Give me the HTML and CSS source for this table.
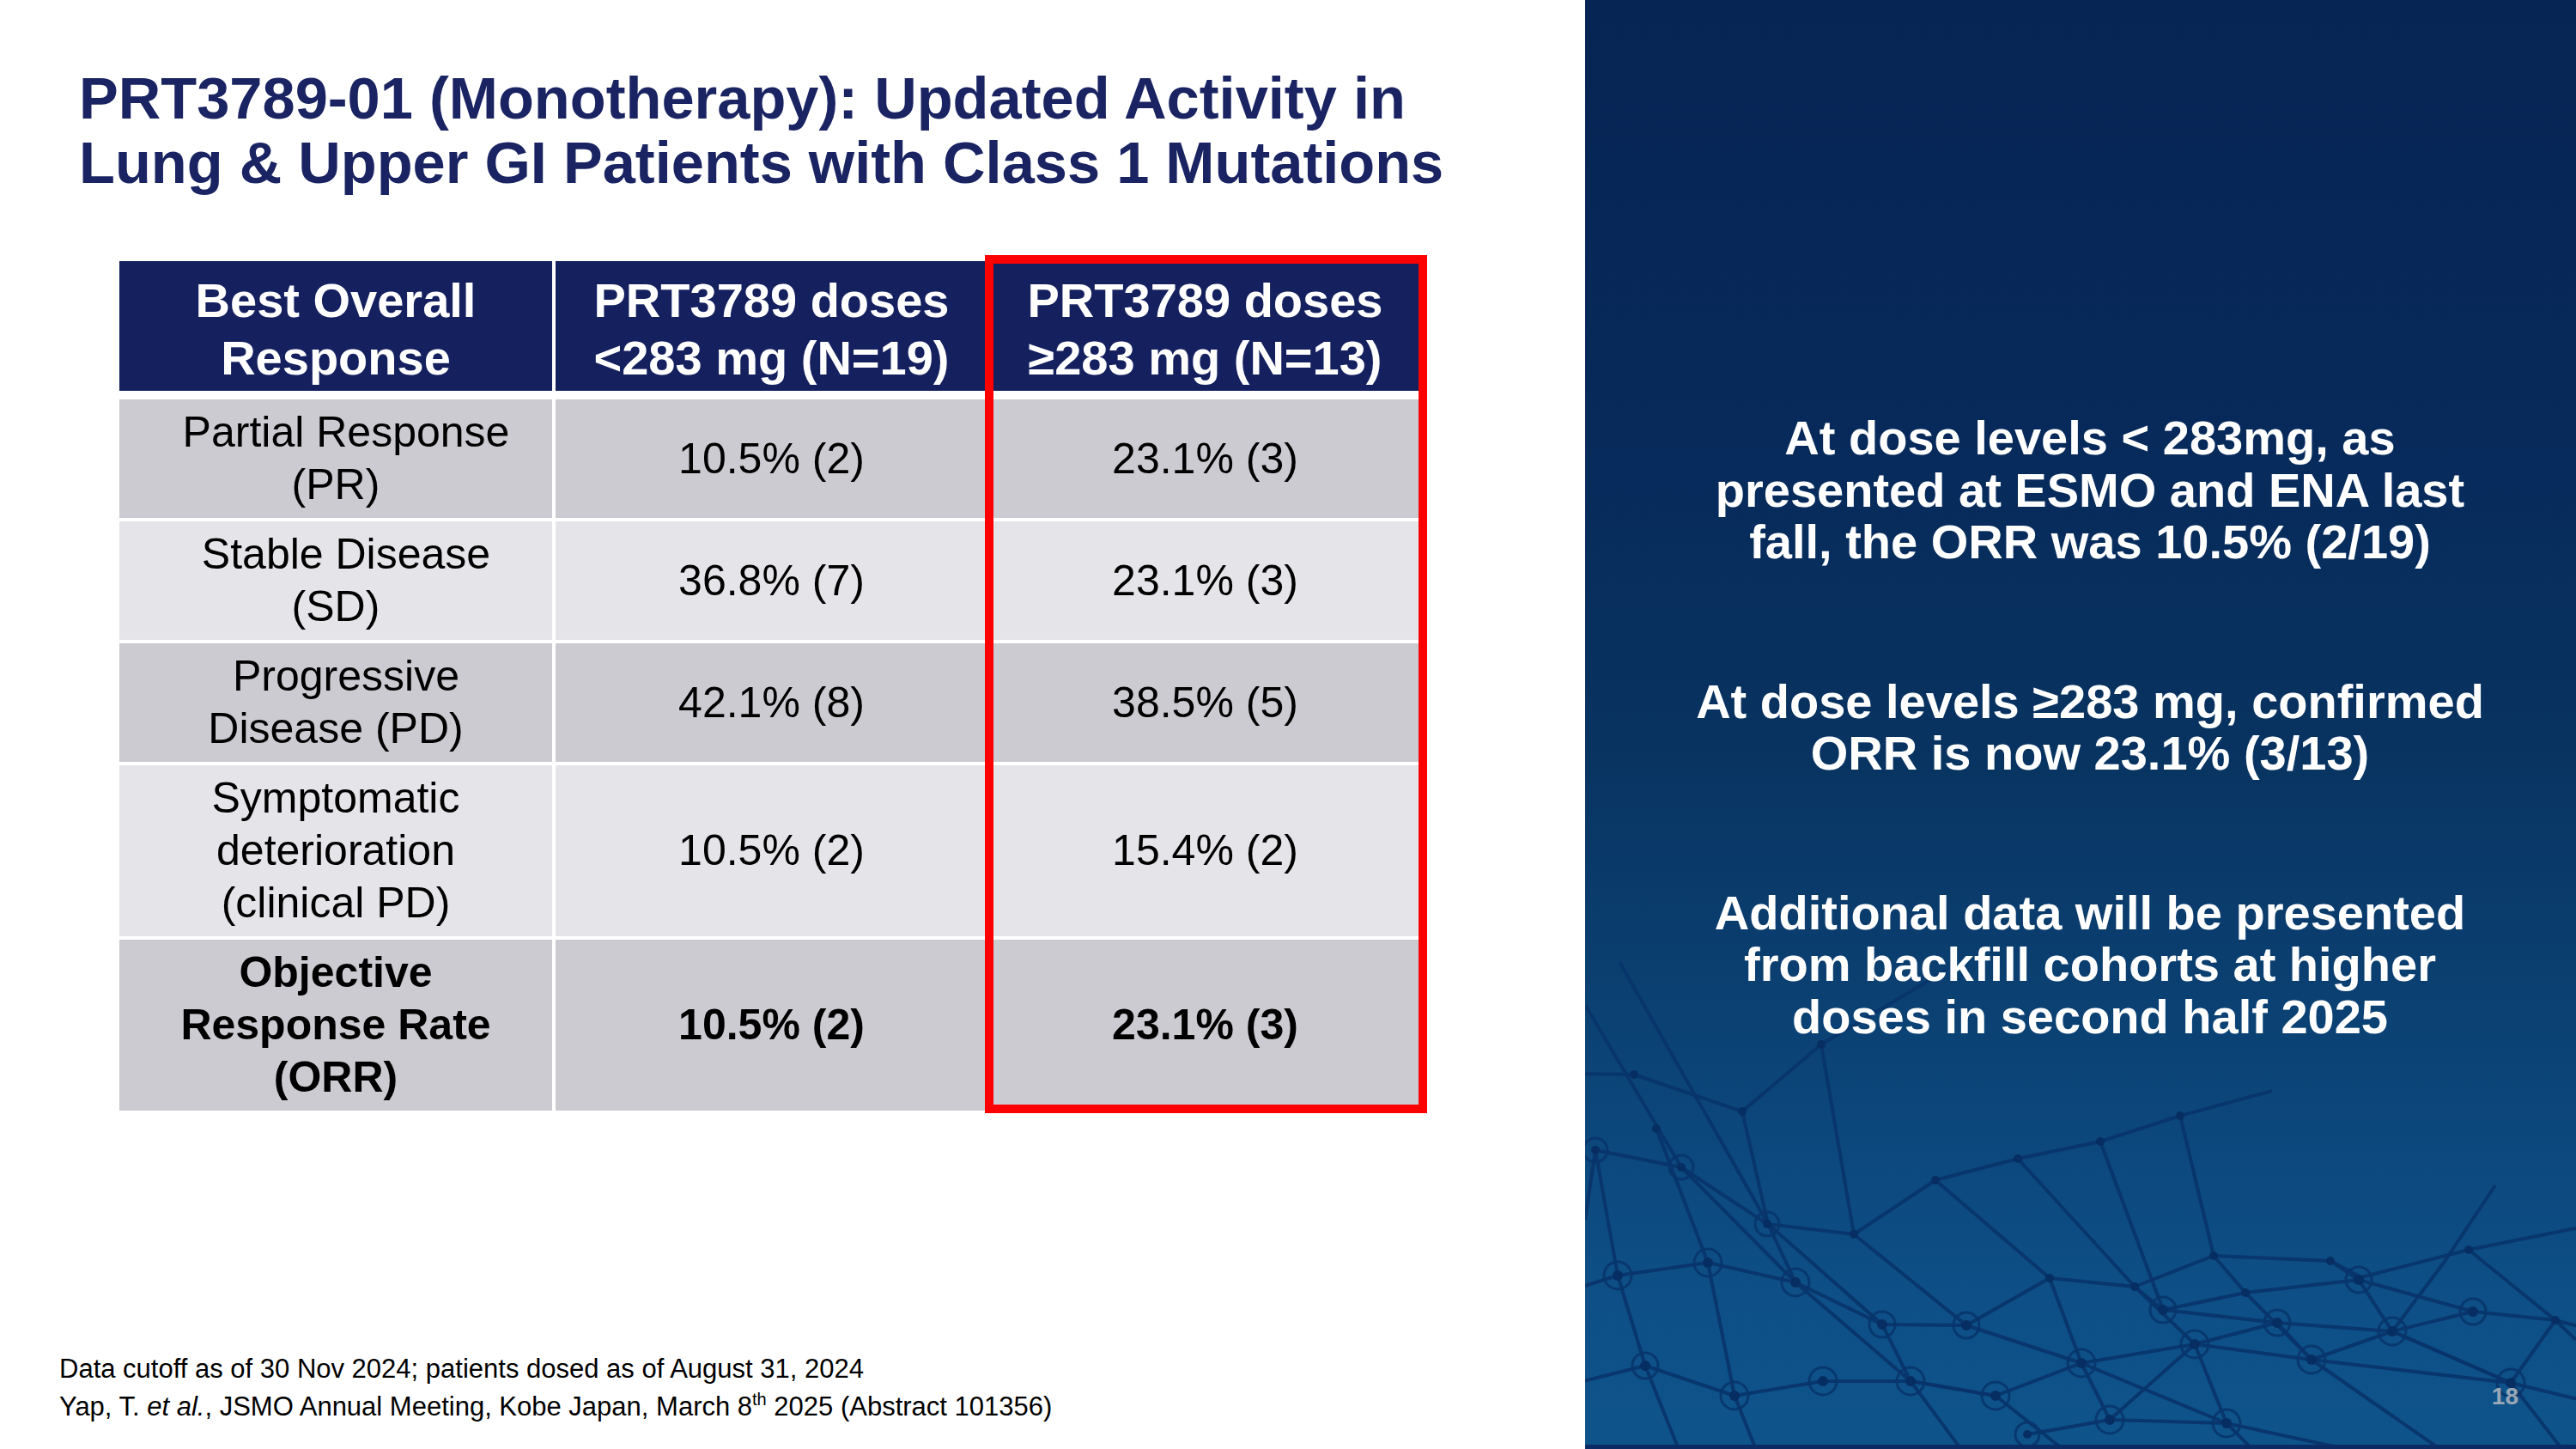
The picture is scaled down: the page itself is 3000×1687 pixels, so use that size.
FILE: index.html
```html
<!DOCTYPE html>
<html lang="en">
<head>
<meta charset="utf-8">
<title>PRT3789-01 Updated Activity</title>
<link rel="stylesheet" href="styles.css">
</head>
<body>
<div class="slide">
  <main class="content">
    <h1 class="title">PRT3789-01 (Monotherapy): Updated Activity in<br>Lung &amp; Upper GI Patients with Class 1 Mutations</h1>

    <div class="table-wrap">
      <div class="grid">
        <div class="cell head">Best Overall<br>Response</div>
        <div class="cell head">PRT3789 doses<br>&lt;283 mg (N=19)</div>
        <div class="cell head">PRT3789 doses<br>≥283 mg (N=13)</div>

        <div class="cell dark"><span><span class="indent">Partial Response</span><br>(PR)</span></div>
        <div class="cell dark">10.5% (2)</div>
        <div class="cell dark">23.1% (3)</div>

        <div class="cell light"><span><span class="indent">Stable Disease</span><br>(SD)</span></div>
        <div class="cell light">36.8% (7)</div>
        <div class="cell light">23.1% (3)</div>

        <div class="cell dark"><span><span class="indent">Progressive</span><br>Disease (PD)</span></div>
        <div class="cell dark">42.1% (8)</div>
        <div class="cell dark">38.5% (5)</div>

        <div class="cell light">Symptomatic<br>deterioration<br>(clinical PD)</div>
        <div class="cell light">10.5% (2)</div>
        <div class="cell light">15.4% (2)</div>

        <div class="cell dark bold">Objective<br>Response Rate<br>(ORR)</div>
        <div class="cell dark bold">10.5% (2)</div>
        <div class="cell dark bold">23.1% (3)</div>
      </div>
      <div class="highlight"></div>
    </div>

    <footer class="notes">
      <p>Data cutoff as of 30 Nov 2024; patients dosed as of August 31, 2024</p>
      <p>Yap, T. <i>et al.</i>, JSMO Annual Meeting, Kobe Japan, March 8<sup>th</sup> 2025 (Abstract 101356)</p>
    </footer>
  </main>

  <aside class="panel">
    <svg class="mesh" width="1154" height="1687" viewBox="0 0 1154 1687" aria-hidden="true">
      <g class="lines">
        <polyline points="-20,1250 57,1251 183,1294 275,1216 420,1130"/>
        <polyline points="12,1339 112,1359 212,1425 313,1437 408,1374 504,1349 600,1329 693,1299 800,1270"/>
        <polyline points="-10,1500 38,1485 143,1470 245,1493 346,1542 444,1543 541,1488 640,1498 732,1462 868,1468 904,1487 1029,1455 1154,1430"/>
        <polyline points="-10,1610 70,1590 174,1625 277,1608 379,1608 478,1625 578,1587 710,1565 846,1583 940,1550 1034,1527 1130,1537 1160,1545"/>
        <polyline points="515,1670 611,1653 747,1657 900,1690"/>
        <polyline points="611,1653 710,1565 806,1540 940,1550 1078,1610 1160,1630"/>
        <polyline points="673,1525 769,1505 901,1490 1034,1527"/>
        <polyline points="640,1498 673,1525 806,1540 846,1583 1078,1610"/>
        <polyline points="12,1339 38,1485 70,1590 110,1690"/>
        <polyline points="83,1314 143,1470 174,1625 200,1690"/>
        <polyline points="0,1170 112,1359 245,1493 379,1608 478,1625 560,1690"/>
        <polyline points="40,1120 213,1425 346,1542 379,1608 440,1690"/>
        <polyline points="183,1294 213,1425 245,1493"/>
        <polyline points="275,1216 313,1437 444,1543 578,1587 747,1657 780,1690"/>
        <polyline points="408,1374 541,1488 578,1587 611,1653"/>
        <polyline points="504,1349 640,1498 710,1565 747,1657"/>
        <polyline points="693,1299 732,1462 769,1505 846,1583 1000,1690"/>
        <polyline points="600,1329 673,1525"/>
        <polyline points="868,1468 901,1490 940,1550 1078,1610 1140,1690"/>
        <polyline points="1029,1455 1130,1537 1154,1560"/>
        <polyline points="940,1550 1000,1470 1060,1380"/>
        <polyline points="1078,1610 1130,1537"/>
        <polyline points="0,1420 12,1339"/>
      </g>
      <g class="rings">
        <circle cx="12" cy="1339" r="14"/><circle cx="112" cy="1359" r="14"/>
        <circle cx="212" cy="1425" r="14"/><circle cx="143" cy="1470" r="16"/>
        <circle cx="38" cy="1485" r="16"/><circle cx="245" cy="1493" r="16"/>
        <circle cx="346" cy="1542" r="15"/><circle cx="444" cy="1543" r="15"/>
        <circle cx="70" cy="1590" r="15"/><circle cx="174" cy="1625" r="16"/>
        <circle cx="277" cy="1608" r="16"/><circle cx="379" cy="1608" r="16"/>
        <circle cx="478" cy="1625" r="16"/><circle cx="578" cy="1587" r="16"/>
        <circle cx="673" cy="1525" r="15"/><circle cx="710" cy="1565" r="16"/>
        <circle cx="806" cy="1540" r="15"/><circle cx="846" cy="1583" r="16"/>
        <circle cx="901" cy="1490" r="15"/><circle cx="940" cy="1550" r="16"/>
        <circle cx="1034" cy="1527" r="15"/><circle cx="1078" cy="1610" r="16"/>
        <circle cx="611" cy="1653" r="16"/><circle cx="747" cy="1657" r="16"/>
        <circle cx="515" cy="1670" r="14"/>
      </g>
      <g class="dots">
        <circle cx="12" cy="1339" r="5"/><circle cx="112" cy="1359" r="5"/>
        <circle cx="212" cy="1425" r="5"/><circle cx="313" cy="1437" r="5"/>
        <circle cx="143" cy="1470" r="6"/><circle cx="38" cy="1485" r="6"/>
        <circle cx="245" cy="1493" r="6"/><circle cx="346" cy="1542" r="6"/>
        <circle cx="444" cy="1543" r="6"/><circle cx="70" cy="1590" r="6"/>
        <circle cx="174" cy="1625" r="6"/><circle cx="277" cy="1608" r="6"/>
        <circle cx="379" cy="1608" r="6"/><circle cx="478" cy="1625" r="6"/>
        <circle cx="578" cy="1587" r="6"/><circle cx="541" cy="1488" r="5"/>
        <circle cx="640" cy="1498" r="5"/><circle cx="673" cy="1525" r="6"/>
        <circle cx="710" cy="1565" r="6"/><circle cx="769" cy="1505" r="5"/>
        <circle cx="806" cy="1540" r="6"/><circle cx="846" cy="1583" r="6"/>
        <circle cx="901" cy="1490" r="6"/><circle cx="940" cy="1550" r="6"/>
        <circle cx="1034" cy="1527" r="6"/><circle cx="1078" cy="1610" r="6"/>
        <circle cx="1130" cy="1537" r="5"/><circle cx="611" cy="1653" r="6"/>
        <circle cx="747" cy="1657" r="6"/><circle cx="515" cy="1670" r="5"/>
        <circle cx="183" cy="1294" r="5"/><circle cx="275" cy="1216" r="5"/>
        <circle cx="408" cy="1374" r="5"/><circle cx="504" cy="1349" r="5"/>
        <circle cx="600" cy="1329" r="5"/><circle cx="693" cy="1299" r="5"/>
        <circle cx="732" cy="1462" r="5"/><circle cx="868" cy="1468" r="5"/>
        <circle cx="1029" cy="1455" r="5"/><circle cx="57" cy="1251" r="5"/>
        <circle cx="83" cy="1314" r="5"/>
      </g>
    </svg>

    <div class="points">
      <p>At dose levels &lt; 283mg, as<br>presented at ESMO and ENA last<br>fall, the ORR was 10.5% (2/19)</p>
      <p>At dose levels ≥283 mg, confirmed<br>ORR is now 23.1% (3/13)</p>
      <p>Additional data will be presented<br>from backfill cohorts at higher<br>doses in second half 2025</p>
    </div>

    <span class="page-num">18</span>
  </aside>
</div>
</body>
</html>
```

FILE: styles.css
```css
* {
  box-sizing: border-box;
}

html, body {
  margin: 0;
  padding: 0;
  background: #ffffff;
}

body {
  font-family: "Liberation Sans", Arial, sans-serif;
  width: 3000px;
  height: 1687px;
  overflow: hidden;
}

.slide {
  display: grid;
  grid-template-columns: 1846px 1154px;
  width: 3000px;
  height: 1687px;
}

/* ---------- Left content ---------- */
.content {
  display: flex;
  flex-direction: column;
  height: 1687px;
  background: #ffffff;
}

.title {
  margin: 77px 0 0 92px;
  font-size: 68.6px;
  line-height: 75px;
  font-weight: 700;
  color: #1a2462;
  letter-spacing: 0;
}

.table-wrap {
  position: relative;
  margin: 77px 0 0 139px;
  width: 1514px;
}

.grid {
  display: grid;
  grid-template-columns: 504px 503px 499px;
  column-gap: 4px;
  row-gap: 4px;
  background: #ffffff;
}

.cell {
  display: flex;
  align-items: center;
  justify-content: center;
  text-align: center;
  padding: 8px 6px;
  font-size: 50px;
  line-height: 61px;
  color: #000000;
}

.indent {
  padding-left: 24px;
}

.head {
  background: #15205f;
  color: #ffffff;
  font-weight: 700;
  font-size: 56px;
  line-height: 67px;
  padding: 12px 6px 5px;
  margin-bottom: 6px;
}

.dark {
  background: #cbcbd1;
}

.light {
  background: #e5e5e9;
}

.bold {
  font-weight: 700;
}

.highlight {
  position: absolute;
  left: 1008px;
  top: -7px;
  width: 515px;
  height: 999px;
  border: 10px solid #ff0000;
  pointer-events: none;
}

.notes {
  margin: auto 0 0 69px;
  padding-bottom: 27px;
  font-size: 31px;
  line-height: 44px;
  color: #000000;
}

.notes p {
  margin: 0;
}

.notes sup {
  font-size: 20px;
  line-height: 0;
  vertical-align: 12px;
}

/* ---------- Right panel ---------- */
.panel {
  position: relative;
  display: flex;
  flex-direction: column;
  justify-content: center;
  height: 1687px;
  padding: 12px 18px 0 40px;
  overflow: hidden;
  background: linear-gradient(180deg, #062454 0%, #072a5b 30%, #08325f 50%, #0b4173 70%, #0d4e85 88%, #0e548b 100%);
  border-bottom: 5px solid #0a2b63;
}

.mesh {
  position: absolute;
  left: 0;
  top: 0;
}

.mesh .lines polyline {
  fill: none;
  stroke: #08356b;
  stroke-width: 4;
  stroke-linejoin: round;
  opacity: 0.95;
}

.mesh .rings circle {
  fill: none;
  stroke: #08356b;
  stroke-width: 3;
  opacity: 0.9;
}

.mesh .dots circle {
  fill: #072e62;
}

.points {
  position: relative;
  display: flex;
  flex-direction: column;
  gap: 125px;
}

.points p {
  margin: 0;
  text-align: center;
  color: #ffffff;
  font-weight: 700;
  font-size: 56px;
  line-height: 60.5px;
}

.page-num {
  position: absolute;
  right: 67px;
  bottom: 40px;
  font-size: 28px;
  font-weight: 700;
  color: #9aa6b6;
}
```
